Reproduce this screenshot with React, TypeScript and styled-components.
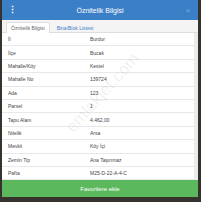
import styled, { createGlobalStyle } from "styled-components";

const GlobalStyle = createGlobalStyle`
  html, body {
    margin: 0;
    padding: 0;
    background: #36322e;
  }
  body {
    font-family: "Liberation Sans", Arial, sans-serif;
  }
`;

const rows: [string, string][] = [
  ["İl", "Burdur"],
  ["İlçe", "Bucak"],
  ["Mahalle/Köy", "Kestel"],
  ["Mahalle No", "139724"],
  ["Ada", "123"],
  ["Parsel", "1"],
  ["Tapu Alanı", "4.462,00"],
  ["Nitelik", "Arsa"],
  ["Mevkii", "Köy İçi"],
  ["Zemin Tip", "Ana Taşınmaz"],
  ["Pafta", "M25-D-22-A-4-C"],
];

const Panel = styled.div`
  position: relative;
  margin-left: 2px;
  width: 196px;
  height: 197px;
  display: flex;
  flex-direction: column;
  background: #fff;
  overflow: hidden;
`;

const Header = styled.div`
  height: 20px;
  flex-shrink: 0;
  background: #3b80c6;
  color: #fff;
  display: grid;
  grid-template-columns: 20px 1fr 20px;
  align-items: center;
`;

const MenuDots = styled.span`
  justify-self: center;
  font-size: 9px;
  font-weight: bold;
  line-height: 1;
`;

const Title = styled.span`
  text-align: center;
  font-size: 7px;
`;

const Close = styled.span`
  justify-self: center;
  font-size: 8px;
  color: rgba(255, 255, 255, 0.35);
`;

const TabBar = styled.div`
  height: 13px;
  flex-shrink: 0;
  background: #f4f4f4;
  border-bottom: 1px solid #dedede;
  box-sizing: border-box;
  display: flex;
  align-items: flex-end;
  padding-left: 4px;
  gap: 2px;
`;

const Tab = styled.div<{ $active?: boolean }>`
  height: 11px;
  box-sizing: border-box;
  padding: 0 4px;
  display: flex;
  align-items: center;
  font-size: 5px;
  color: ${(p) => (p.$active ? "#666" : "#3b80c6")};
  background: ${(p) => (p.$active ? "#fff" : "transparent")};
  border: 1px solid ${(p) => (p.$active ? "#dedede" : "transparent")};
  border-bottom: none;
  margin-bottom: -1px;
`;

const Body = styled.div`
  position: relative;
  flex: 1;
  border-right: 4px solid #ececec;
  display: flex;
  flex-direction: column;
`;

const Row = styled.div`
  height: 13.4px;
  box-sizing: border-box;
  border-bottom: 1px solid #e8e8e8;
  display: grid;
  grid-template-columns: 88px 1fr;
  align-items: center;
  font-size: 5px;
  color: #444;
`;

const Label = styled.span`
  padding-left: 6px;
`;

const Value = styled.span``;

const Watermark = styled.div`
  position: absolute;
  left: 101px;
  top: 60px;
  font-size: 17px;
  white-space: nowrap;
  color: rgba(0, 0, 0, 0.07);
  transform: translate(-50%, -50%) rotate(-48deg);
  pointer-events: none;
`;

const FavButton = styled.button`
  height: 17px;
  flex-shrink: 0;
  border: none;
  background: #5cb85c;
  color: #fff;
  font-family: "Liberation Sans", Arial, sans-serif;
  font-size: 6px;
  padding: 0;
  margin: 0;
  width: 100%;
`;

export default function App() {
  return (
    <>
      <GlobalStyle />
      <Panel>
        <Header>
          <MenuDots>⋮</MenuDots>
          <Title>Öznitelik Bilgisi</Title>
          <Close>×</Close>
        </Header>
        <TabBar>
          <Tab $active>Öznitelik Bilgisi</Tab>
          <Tab>Bina/Blok Listesi</Tab>
        </TabBar>
        <Body>
          {rows.map(([k, v]) => (
            <Row key={k}>
              <Label>{k}</Label>
              <Value>{v}</Value>
            </Row>
          ))}
          <Watermark>emlakjet.com</Watermark>
        </Body>
        <FavButton>Favorilere ekle</FavButton>
      </Panel>
    </>
  );
}
